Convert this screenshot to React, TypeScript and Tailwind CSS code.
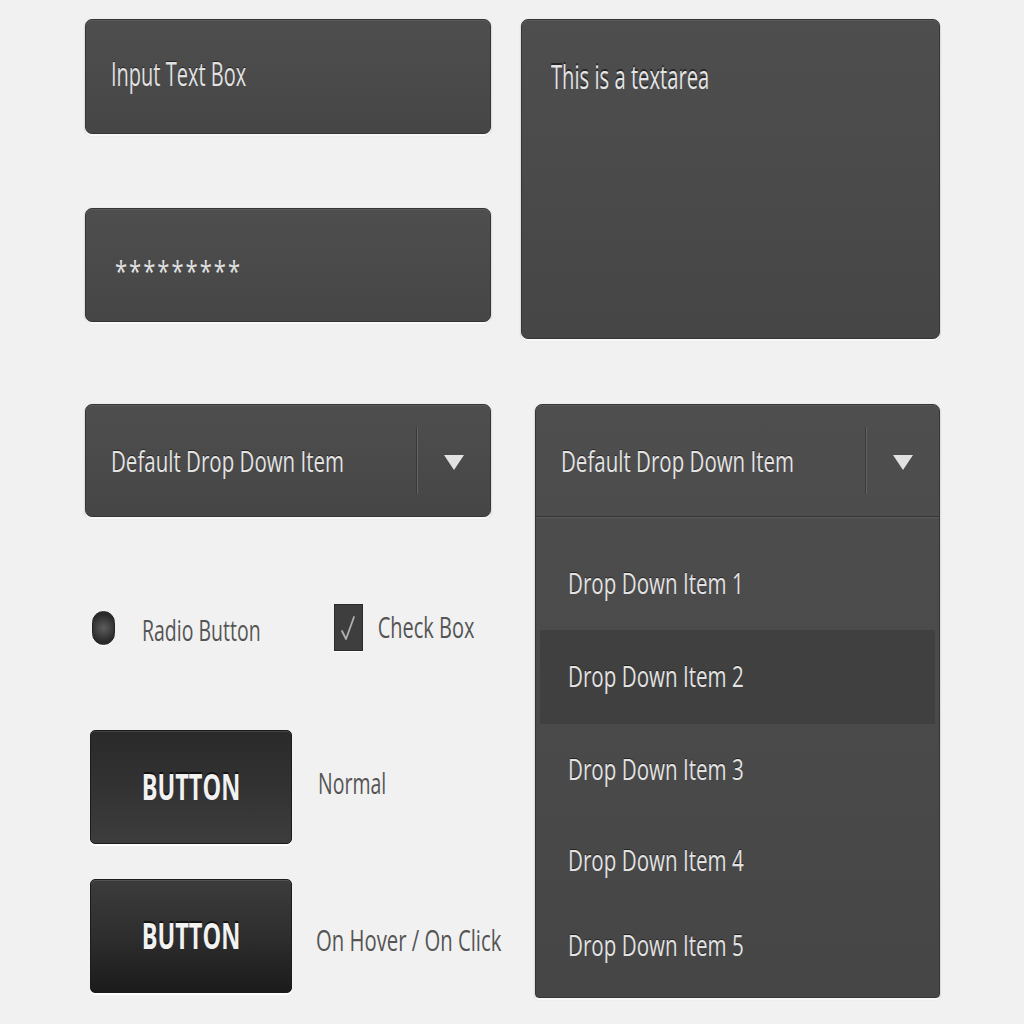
import type { ReactNode } from "react";

const box =
  "rounded-[7px] border border-[#363636] bg-gradient-to-b from-[#4e4e4e] to-[#464646] shadow-[inset_0_1px_0_rgba(255,255,255,0.07),0_2px_1px_rgba(255,255,255,0.9),0_1px_2px_rgba(0,0,0,0.35)]";

function Txt({ children, className = "" }: { children: ReactNode; className?: string }) {
  return <span className={`inline-block origin-center whitespace-nowrap ${className}`}>{children}</span>;
}

function Triangle() {
  return (
    <svg width="22" height="18" viewBox="0 0 22 18">
      <path d="M1 2 L21 2 L11 17 Z" fill="#e2e2e2" />
    </svg>
  );
}

function SelectHead() {
  return (
    <div className="flex h-[111px] items-stretch">
      <div className="flex flex-1 items-center pl-[25px] pt-[2px]">
        <Txt className="text-[20.5px] text-[#e4e4e4] scale-y-[1.45] [text-shadow:0_-1px_0_rgba(0,0,0,0.5)]">
          Default Drop Down Item
        </Txt>
      </div>
      <div className="my-[22px] flex w-[2px]">
        <div className="w-px bg-[#3a3a3a]" />
        <div className="w-px bg-[#626262]" />
      </div>
      <div className="flex w-[72px] items-center justify-center pt-[2px]">
        <Triangle />
      </div>
    </div>
  );
}

const items = [
  { label: "Drop Down Item 1", h: "h-[94px]", active: false },
  { label: "Drop Down Item 2", h: "h-[94px]", active: true },
  { label: "Drop Down Item 3", h: "h-[90px]", active: false },
  { label: "Drop Down Item 4", h: "h-[92px]", active: false },
  { label: "Drop Down Item 5", h: "h-[78px]", active: false },
];

function Button({ variant }: { variant: "normal" | "hover" }) {
  const bg =
    variant === "normal"
      ? "bg-gradient-to-b from-[#2a2a2a] via-[#323232] to-[#3d3d3d]"
      : "bg-gradient-to-b from-[#3c3c3c] via-[#2e2e2e] to-[#1b1b1b]";
  return (
    <div
      className={`flex h-[114px] w-[202px] shrink-0 items-center justify-center rounded-[5px] border border-[#1c1c1c] ${bg} shadow-[inset_0_1px_0_rgba(255,255,255,0.12),0_2px_1px_rgba(255,255,255,0.9)]`}
    >
      <Txt className="text-[23.5px] font-bold text-[#f2f2f2] scale-y-[1.55] [text-shadow:0_-1px_0_rgba(0,0,0,0.6)]">
        BUTTON
      </Txt>
    </div>
  );
}

export default function App() {
  return (
    <div className="flex h-[1024px] w-[1024px] gap-[30px] bg-[#f1f1f1] pl-[85px] pt-[19px] font-['Open_Sans',sans-serif]">
      {/* left column */}
      <div className="flex w-[406px] shrink-0 flex-col">
        <div className={`flex h-[115px] items-center pl-[25px] pb-[4px] ${box}`}>
          <Txt className="text-[20px] text-[#e2e2e2] scale-y-[1.6] [text-shadow:0_-1px_0_rgba(0,0,0,0.5)]">
            Input Text Box
          </Txt>
        </div>

        <div className={`mt-[74px] flex h-[114px] items-center pl-[29px] ${box}`}>
          <Txt className="translate-y-[5px] text-[22px] tracking-[2px] text-[#e2e2e2] scale-y-[1.3]">
            *********
          </Txt>
        </div>

        <div className={`mt-[82px] ${box}`}>
          <SelectHead />
        </div>

        {/* radio + checkbox */}
        <div className="mt-[87px] flex h-[47px] items-center">
          <span className="ml-[7px] h-[34px] w-[23px] rounded-full border border-[#252525] bg-[radial-gradient(circle,#5e5e5e_0%,#474747_30%,#2a2a2a_70%)] shadow-[0_1px_0_rgba(255,255,255,0.8)]" />
          <Txt className="ml-[27px] translate-y-[3px] text-[19.5px] text-[#555] scale-y-[1.45]">Radio Button</Txt>
          <span className="ml-[73px] flex h-[47px] w-[29px] items-center justify-center border border-[#2b2b2b] bg-[#3e3e3e] shadow-[0_1px_0_rgba(255,255,255,0.9)]">
            <svg width="20" height="32" viewBox="0 0 20 32">
              <path d="M4 19 L8 27 L16 5" fill="none" stroke="#b0b0b0" strokeWidth="1.8" strokeLinecap="round" strokeLinejoin="round" />
            </svg>
          </span>
          <Txt className="ml-[15px] text-[20px] text-[#555] scale-y-[1.45]">Check Box</Txt>
        </div>

        {/* buttons */}
        <div className="ml-[5px] mt-[79px] flex items-center">
          <Button variant="normal" />
          <Txt className="ml-[26px] -translate-y-[3px] text-[19.5px] text-[#555] scale-y-[1.45]">Normal</Txt>
        </div>
        <div className="ml-[5px] mt-[35px] flex items-center">
          <Button variant="hover" />
          <Txt className="ml-[24px] translate-y-[3px] text-[20.3px] text-[#555] scale-y-[1.45]">On Hover / On Click</Txt>
        </div>
      </div>

      {/* right column */}
      <div className="flex w-[419px] shrink-0 flex-col">
        <div className={`h-[320px] pl-[29px] pt-[41px] ${box}`}>
          <Txt className="text-[20.2px] text-[#e4e4e4] scale-y-[1.6] [text-shadow:0_-1px_0_rgba(0,0,0,0.5)]">
            This is a textarea
          </Txt>
        </div>

        <div className={`ml-[14px] mt-[65px] flex h-[594px] w-[405px] flex-col rounded-b-[4px] ${box}`}>
          <SelectHead />
          <div className="h-[2px] border-t border-[#363636] bg-[#5b5b5b]" />
          <div className="flex flex-col px-[4px] pt-[18px]">
            {items.map((it) => (
              <div
                key={it.label}
                className={`flex ${it.h} items-center pl-[28px] ${it.active ? "bg-[#404040] pb-[2px]" : ""}`}
              >
                <Txt className="text-[20.6px] text-[#e2e2e2] scale-y-[1.45] [text-shadow:0_-1px_0_rgba(0,0,0,0.5)]">
                  {it.label}
                </Txt>
              </div>
            ))}
          </div>
        </div>
      </div>
    </div>
  );
}
